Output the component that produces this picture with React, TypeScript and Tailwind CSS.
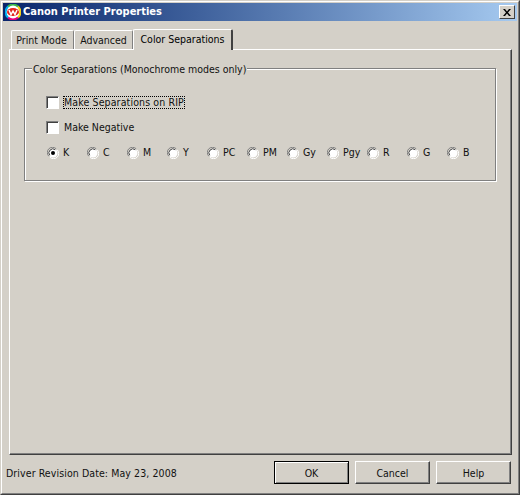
const font = "font-['DejaVu_Sans_Condensed','Noto_Sans',sans-serif]";

function Logo() {
  return (
    <svg width="16" height="16" viewBox="0 0 16 16" className="shrink-0">
      <circle cx="8" cy="8" r="7.5" fill="#fff" />
      <path d="M3 2.5A7.5 7.5 0 0 1 13 2.5" stroke="#39b54a" strokeWidth="2" fill="none" />
      <path d="M13 2.5A7.5 7.5 0 0 1 13 13.5" stroke="#f7d117" strokeWidth="2" fill="none" />
      <path d="M13 13.5A7.5 7.5 0 0 1 3 13.5" stroke="#e6007e" strokeWidth="2" fill="none" />
      <path d="M3 13.5A7.5 7.5 0 0 1 3 2.5" stroke="#00aeef" strokeWidth="2" fill="none" />
      <ellipse cx="8" cy="8" rx="6" ry="4" fill="#e2231a" />
      <path d="M4 6l2 4.5 2-3.5 2 3.5 2-4.5" stroke="#fff" strokeWidth="1.5" fill="none" />
    </svg>
  );
}

function Tab({ label, active, first }: { label: string; active?: boolean; first?: boolean }) {
  if (active) {
    return (
      <div className="relative z-10 -mb-px flex h-[21px] w-[100px] items-start justify-center rounded-t-[2px] border-t border-l border-r-2 border-t-white border-l-white border-r-[#404040] bg-[#d4d0c8] pt-[2px] text-black">
        {label}
      </div>
    );
  }
  return (
    <div className="flex h-[19px] items-center justify-center rounded-t-[2px] border-t border-l border-r border-t-white border-l-white border-r-[#808080] px-[4px] pt-[2px] text-[#111]">
      <span className={first ? "mr-[2px]" : ""}>{label}</span>
    </div>
  );
}

function Checkbox({ label, focus }: { label: string; focus?: boolean }) {
  return (
    <div className="flex h-[13px] items-center">
      <span className="h-[13px] w-[13px] shrink-0 border-t border-l border-r border-b border-t-[#808080] border-l-[#808080] border-r-white border-b-white bg-white shadow-[inset_1px_1px_0_#404040]" />
      <span className={focus ? "ml-[4px] border border-dotted border-black leading-[11px] tracking-[0.13px]" : "ml-[4px] pl-px pt-px"}>{label}</span>
    </div>
  );
}

function Radio({ label, checked }: { label: string; checked?: boolean }) {
  return (
    <div className="flex w-[40px] items-center pl-px">
      <svg width="12" height="12" viewBox="0 0 12 12" className="shrink-0">
        <circle cx="6" cy="6" r="4.5" fill="#fff" />
        <path d="M1.8 9.2A5.2 5.2 0 0 1 9.2 1.8" stroke="#808080" fill="none" />
        <path d="M2.7 8.3A4 4 0 0 1 8.3 2.7" stroke="#404040" fill="none" />
        <path d="M10.2 2.8A5.2 5.2 0 0 1 2.8 10.2" stroke="#fff" fill="none" />
        {checked && <circle cx="6" cy="6" r="2" fill="#000" />}
      </svg>
      <span className="ml-[4px]">{label}</span>
    </div>
  );
}

function Btn({ label, main }: { label: string; main?: boolean }) {
  return (
    <button
      className={
        main
          ? "h-[23px] w-[75px] border border-black bg-[#d4d0c8] pt-[2px] shadow-[inset_1px_1px_0_#fff,inset_-1px_-1px_0_#808080]"
          : "h-[23px] w-[75px] border-t border-l border-r border-b border-t-white border-l-white border-r-[#404040] border-b-[#404040] bg-[#d4d0c8] pt-[2px] shadow-[inset_-1px_-1px_0_#808080]"
      }
    >
      {label}
    </button>
  );
}

export default function App() {
  const inks = ["C", "M", "Y", "PC", "PM", "Gy", "Pgy", "R", "G", "B"];

  return (
    <div className={`${font} h-[495px] w-[520px] overflow-hidden border border-t-[#d4d0c8] border-l-[#d4d0c8] border-r-[#404040] border-b-[#404040] bg-[#d4d0c8] text-[10.5px] text-[#111]`}>
      <div className="flex h-full flex-col border border-t-white border-l-white border-r-[#808080] border-b-[#808080] p-px">
        <div className="flex h-[18px] shrink-0 items-center bg-gradient-to-r from-[#0a246a] to-[#a6caf0] pl-[2px] pr-[2px]">
          <Logo />
          <span className="ml-[2px] flex-1 text-[11px] font-bold text-white">Canon Printer Properties</span>
          <div className="flex h-[14px] w-[16px] items-center justify-center border border-t-white border-l-white border-r-[#404040] border-b-[#404040] bg-[#d4d0c8]">
            <svg width="8" height="7" viewBox="0 0 8 7">
              <path d="M0 0h2l2 2.5L6 0h2L5 3.5 8 7H6L4 4.5 2 7H0l3-3.5z" fill="#000" />
            </svg>
          </div>
        </div>

        <div className="flex min-h-0 flex-1 flex-col pl-[6px] pr-[5px] pt-[8px]">
          <div className="flex h-[20px] items-end pl-[2px]">
            <div className="w-[63px]">
              <Tab label="Print Mode" first />
            </div>
            <div className="w-[59px]">
              <Tab label="Advanced" />
            </div>
            <Tab label="Color Separations" active />
          </div>

          <div className="h-[406px] shrink-0 border border-t-white border-l-white border-r-[#404040] border-b-[#404040] px-[14px] pt-[18px] shadow-[inset_-1px_-1px_0_#808080]">
            <div className="relative h-[113px] w-[472px] border border-[#808080] pl-[21px] pt-[27px] shadow-[1px_1px_0_#fff,inset_1px_1px_0_#fff]">
              <span className="absolute -top-[7px] left-[7px] bg-[#d4d0c8] px-px">Color Separations (Monochrome modes only)</span>
              <div className="flex flex-col">
                <Checkbox label="Make Separations on RIP" focus />
                <div className="mt-[12px]">
                  <Checkbox label="Make Negative" />
                </div>
                <div className="mt-[11px] flex">
                  <Radio label="K" checked />
                  {inks.map((ink) => (
                    <Radio key={ink} label={ink} />
                  ))}
                </div>
              </div>
            </div>
          </div>

          <div className="flex flex-1 items-start pr-px pt-[6px]">
            <span className="-ml-[3px] mt-[5px] flex-1 tracking-[0.09px]">Driver Revision Date: May 23, 2008</span>
            <div className="flex gap-[6px]">
              <Btn label="OK" main />
              <Btn label="Cancel" />
              <Btn label="Help" />
            </div>
          </div>
        </div>
      </div>
    </div>
  );
}
